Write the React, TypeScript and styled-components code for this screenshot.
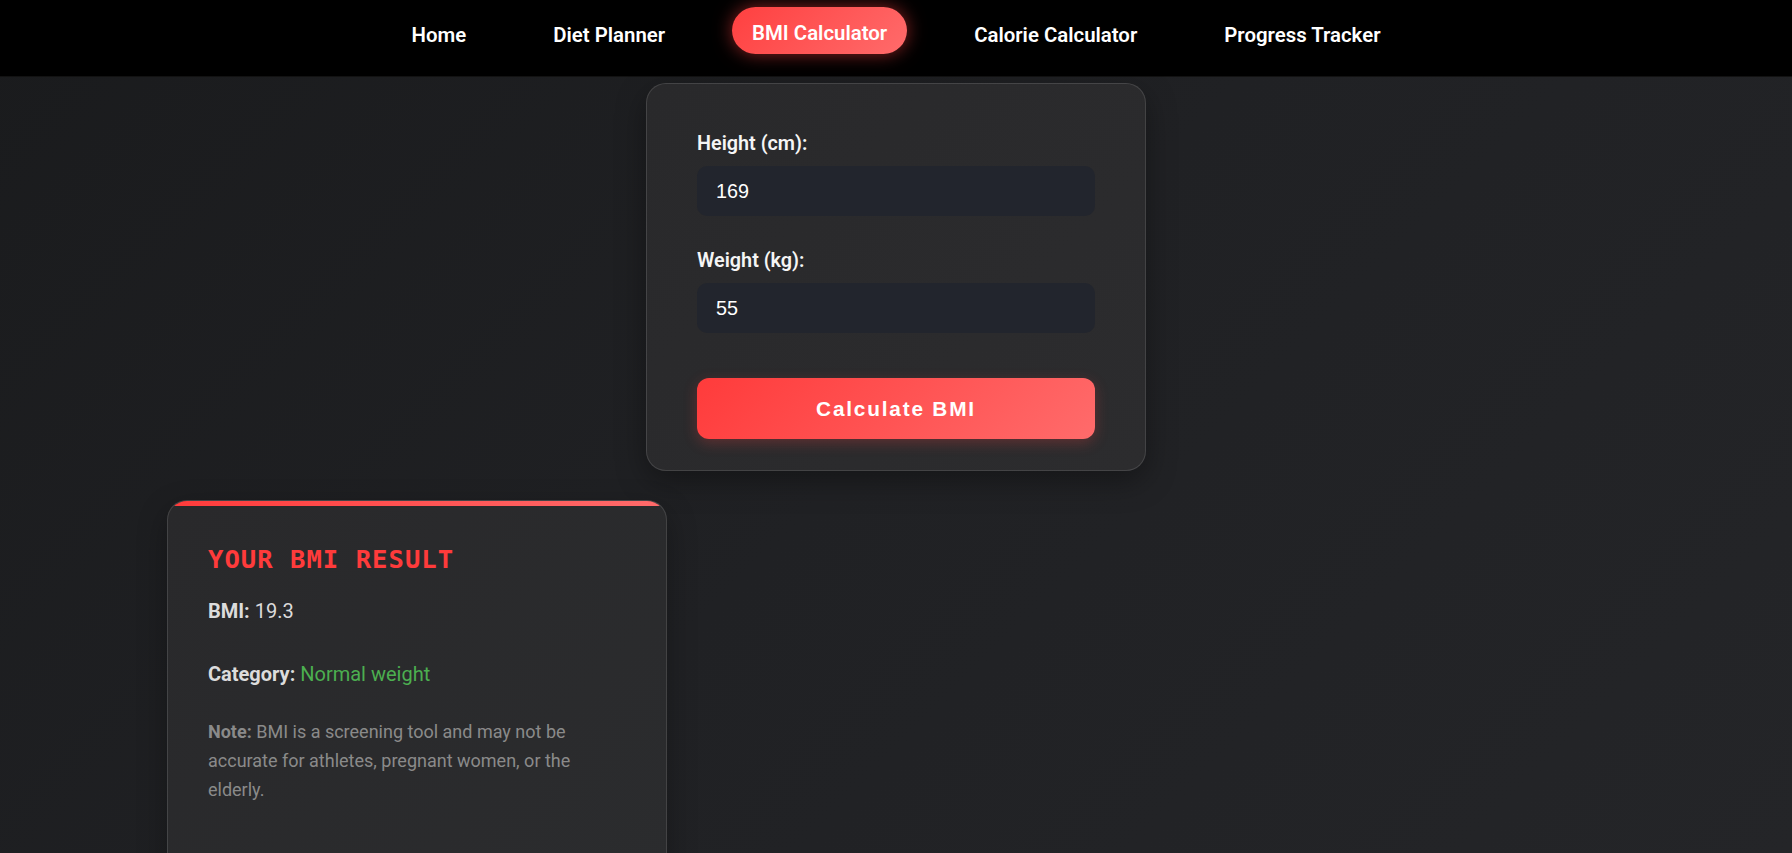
import styled, { createGlobalStyle } from "styled-components";

const GlobalStyle = createGlobalStyle`
  * {
    box-sizing: border-box;
  }
  body {
    margin: 0;
    min-height: 100vh;
    font-family: "Segoe UI", Roboto, "Noto Sans", sans-serif;
    color: #f2f2f2;
    background: linear-gradient(135deg, #1a1b1d 0%, #202124 50%, #242528 100%);
    background-attachment: fixed;
  }
`;

const NavBar = styled.nav`
  height: 77px;
  display: flex;
  justify-content: center;
  align-items: flex-start;
  gap: 47px;
  padding-top: 9px;
  background: #000;
  border-bottom: 1px solid rgba(255, 255, 255, 0.07);
`;

const NavLink = styled.a<{ $active?: boolean }>`
  display: block;
  height: 47px;
  padding: 14px 20px 9px;
  line-height: 24px;
  font-size: 20.4px;
  font-weight: 600;
  color: #fff;
  text-decoration: none;
  border-radius: 24px;
  white-space: nowrap;
  cursor: pointer;
  ${({ $active }) =>
    $active &&
    `
    background: linear-gradient(135deg, #ff4040, #ff6b6b);
    box-shadow: 0 0 18px rgba(255, 64, 64, 0.55);
    transform: translateY(-2px);
  `}
`;

const Main = styled.main`
  max-width: 1458px;
  margin: 0 auto;
  padding: 6px 0 40px;
  display: flex;
  flex-direction: column;
  gap: 29px;
`;

const FormCard = styled.form`
  align-self: center;
  width: 500px;
  padding: 48px 50px 31px;
  border-radius: 20px;
  border: 1px solid rgba(255, 255, 255, 0.12);
  background: linear-gradient(135deg, #29292b, #2c2c2e);
  box-shadow: 0 10px 30px rgba(0, 0, 0, 0.35);
`;

const Field = styled.div`
  display: flex;
  flex-direction: column;
  gap: 10px;
  margin-bottom: 33px;
`;

const Label = styled.label`
  font-size: 19.8px;
  font-weight: 600;
  line-height: 24px;
  color: #f5f5f5;
`;

const Input = styled.input`
  width: 100%;
  height: 50px;
  padding: 0 19px;
  border: none;
  outline: none;
  border-radius: 10px;
  background: #22252d;
  color: #fff;
  font-family: "Liberation Sans", Arial, sans-serif;
  font-size: 19.8px;
`;

const CalcButton = styled.button`
  width: 100%;
  height: 61px;
  margin-top: 12px;
  border: none;
  border-radius: 12px;
  background: linear-gradient(135deg, #ff3b3b, #ff6b6b);
  box-shadow: 0 4px 14px rgba(255, 64, 64, 0.25);
  color: #fff;
  font-family: "Liberation Sans", Arial, sans-serif;
  font-size: 20.8px;
  font-weight: 700;
  letter-spacing: 1.8px;
  cursor: pointer;
`;

const ResultCard = styled.section`
  position: relative;
  overflow: hidden;
  width: 500px;
  min-height: 420px;
  padding: 42px 40px 40px;
  border-radius: 20px;
  border: 1px solid rgba(255, 255, 255, 0.12);
  background: linear-gradient(135deg, #29292b, #2b2c2e);
  box-shadow: 0 10px 30px rgba(0, 0, 0, 0.3);

  &::before {
    content: "";
    position: absolute;
    top: 0;
    left: 0;
    right: 0;
    height: 5px;
    background: linear-gradient(90deg, #ff3b3b, #ff6b6b);
  }
`;

const ResultTitle = styled.h2`
  margin: 0 0 21px;
  font-family: "DejaVu Sans Mono", "Liberation Mono", monospace;
  font-size: 25.6px;
  font-weight: 700;
  letter-spacing: 1px;
  line-height: 32px;
  color: #ff3b3b;
  text-transform: uppercase;
`;

const ResultLine = styled.p`
  margin: 0 0 32px;
  font-size: 20px;
  line-height: 31px;
  color: #dcdcdc;

  strong {
    font-weight: 700;
  }
`;

const CategoryValue = styled.span`
  color: #4caf50;
`;

const Note = styled.p`
  margin: -5px 0 0;
  font-size: 18px;
  line-height: 29px;
  color: #8a8a8a;
  max-width: 380px;
`;

const links = ["Home", "Diet Planner", "BMI Calculator", "Calorie Calculator", "Progress Tracker"];

const App = () => {
  return (
    <>
      <GlobalStyle />
      <NavBar>
        {links.map((link) => (
          <NavLink key={link} $active={link === "BMI Calculator"}>
            {link}
          </NavLink>
        ))}
      </NavBar>
      <Main>
        <FormCard onSubmit={(e) => e.preventDefault()}>
          <Field>
            <Label htmlFor="height">Height (cm):</Label>
            <Input id="height" type="number" defaultValue={169} />
          </Field>
          <Field>
            <Label htmlFor="weight">Weight (kg):</Label>
            <Input id="weight" type="number" defaultValue={55} />
          </Field>
          <CalcButton type="submit">Calculate BMI</CalcButton>
        </FormCard>

        <ResultCard>
          <ResultTitle>Your BMI Result</ResultTitle>
          <ResultLine>
            <strong>BMI:</strong> 19.3
          </ResultLine>
          <ResultLine>
            <strong>Category:</strong> <CategoryValue>Normal weight</CategoryValue>
          </ResultLine>
          <Note>
            <strong>Note:</strong> BMI is a screening tool and may not be accurate for
            athletes, pregnant women, or the elderly.
          </Note>
        </ResultCard>
      </Main>
    </>
  );
};

export default App;
